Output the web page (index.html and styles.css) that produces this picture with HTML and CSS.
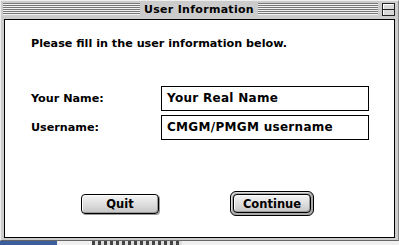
FILE: index.html
```html
<!DOCTYPE html>
<html>
<head>
<meta charset="utf-8">
<title>User Information</title>
<link rel="stylesheet" href="styles.css">
</head>
<body>
<div class="screen">
  <div class="window">
    <div class="titlebar">
      <div class="stripes stripes-left"></div>
      <div class="title">User Information</div>
      <div class="title-right">
        <div class="stripes"></div>
        <div class="shade-box"><span class="shade-line"></span></div>
      </div>
    </div>
    <div class="content">
      <p class="intro">Please fill in the user information below.</p>
      <div class="form">
        <label class="label">Your Name:</label>
        <div class="field">Your Real Name</div>
        <label class="label">Username:</label>
        <div class="field">CMGM/PMGM username</div>
      </div>
      <div class="buttons">
        <button class="btn quit">Quit</button>
        <div class="default-ring"><button class="btn">Continue</button></div>
      </div>
    </div>
    <div class="frame-bottom"></div>
  </div>
  <div class="desktop">
    <span class="desk-blue"></span>
    <span class="desk-gap"></span>
    <span class="desk-text"></span>
  </div>
</div>
</body>
</html>
```

FILE: styles.css
```css
* { box-sizing: border-box; }
html, body { margin: 0; padding: 0; }
body {
  width: 399px;
  height: 245px;
  overflow: hidden;
  background: #fff;
  font-family: "DejaVu Sans", Verdana, sans-serif;
}
.screen {
  width: 399px;
  height: 245px;
  display: flex;
  flex-direction: column;
}
.window {
  width: 399px;
  height: 241px;
  background: #cccccc;
  border-left: 1px solid #eeeeee;
  border-top: 1px solid #eeeeee;
  border-right: 1px solid #888888;
  border-bottom: 1px solid #666666;
  display: flex;
  flex-direction: column;
}
.titlebar {
  height: 18px;
  display: flex;
  align-items: flex-start;
  padding: 2px 3px 0 2px;
}
.stripes {
  height: 12px;
  background: repeating-linear-gradient(to bottom, #777 0, #777 1px, #f2f2f2 1px, #f2f2f2 2px);
}
.stripes-left { flex: 1; }
.title-right {
  flex: 1;
  display: flex;
  align-items: flex-start;
}
.title-right .stripes { flex: 1; }
.title {
  font-weight: bold;
  font-size: 11px;
  line-height: 13px;
  color: #000;
  padding: 0 4px;
  letter-spacing: 0.3px;
}
.shade-box {
  width: 13px;
  height: 13px;
  margin-left: 4px;
  border: 1px solid #222;
  background: #d8d8d8;
  box-shadow: inset 1px 1px 0 #fff;
  display: flex;
  align-items: center;
}
.shade-line {
  display: block;
  width: 100%;
  height: 1px;
  background: #222;
}
.content {
  margin-left: 3px;
  width: 391px;
  height: 219px;
  border: 1px solid #000;
  background: #fff;
  padding: 16px 0 0 26px;
  display: flex;
  flex-direction: column;
}
.intro {
  margin: 0;
  font-size: 11.2px;
  font-weight: bold;
  line-height: 16px;
  color: #000;
}
.form {
  margin-top: 34px;
  display: grid;
  grid-template-columns: 130px 208px;
  grid-auto-rows: 25px;
  row-gap: 4px;
  align-items: center;
}
.label {
  font-size: 11.2px;
  font-weight: bold;
  color: #000;
}
.field {
  height: 25px;
  border: 1px solid #000;
  font-size: 12px;
  font-weight: bold;
  line-height: 22px;
  padding-left: 5px;
  color: #000;
  letter-spacing: 0.3px;
}
.buttons {
  margin-top: 51px;
  display: flex;
  align-items: center;
  padding-left: 50px;
}
.btn {
  width: 78px;
  height: 20px;
  border: 1px solid #000;
  border-radius: 4px;
  background: linear-gradient(to bottom, #f4f4f4, #dadada 60%, #c4c4c4);
  box-shadow: inset 1px 1px 0 #fff, inset -1px -1px 0 #999, 1px 1px 0 #999;
  font-family: "DejaVu Sans", Verdana, sans-serif;
  font-size: 11.5px;
  font-weight: bold;
  color: #000;
  padding: 0;
  line-height: 18px;
}
.quit { margin-right: 71px; }
.default-ring {
  border: 1px solid #000;
  border-radius: 6px;
  padding: 2px;
  background: #aaaaaa;
  box-shadow: inset 1px 1px 0 #ddd;
  display: flex;
}
.default-ring .btn {
  height: 19px;
  box-shadow: inset 1px 1px 0 #fff, inset -1px -1px 0 #999;
}
.frame-bottom { flex: 1; }
.desktop {
  height: 4px;
  display: flex;
  background: #f0f0f0;
}
.desk-blue { width: 57px; background: #3b5e9c; }
.desk-gap { width: 35px; }
.desk-text { width: 90px; background: repeating-linear-gradient(to right, #444 0, #444 3px, #ddd 3px, #ddd 6px); }
```
